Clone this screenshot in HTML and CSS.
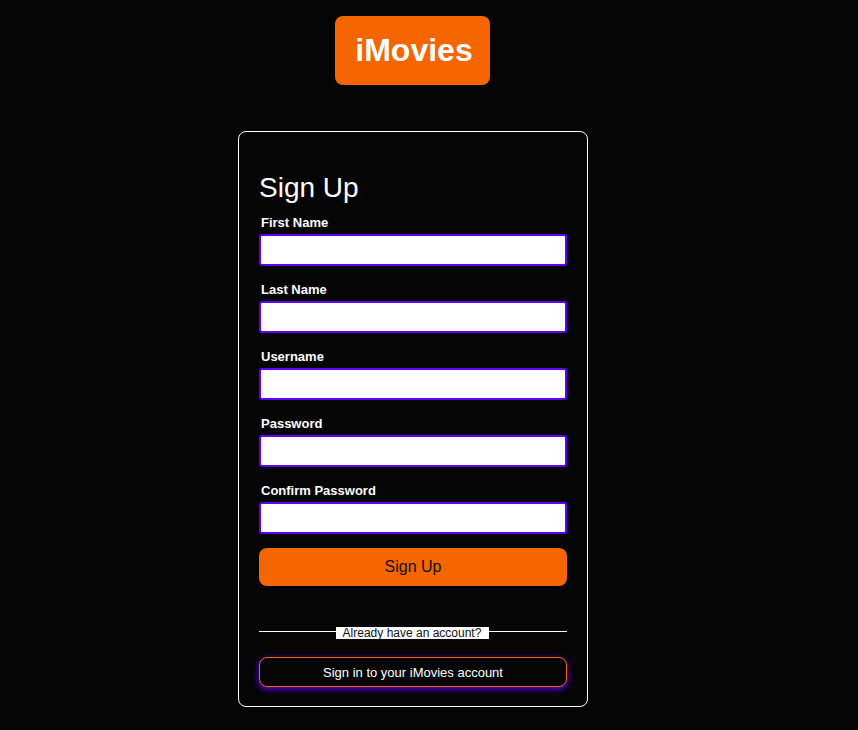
FILE: index.html
```html
<!DOCTYPE html>
<html>
<head>
  <link rel="stylesheet" href="styles.css">
</head>
<body>

<!-- Logo -->
<header class="logo-row">
  <a class="logo">iMovies</a>
</header>

<!-- Sign up form -->
<main class="card">
  <h1>Sign Up</h1>
  <form class="signup-form">
    <div class="field">
      <label for="firstName">First Name</label>
      <input type="text" id="firstName">
    </div>
    <div class="field">
      <label for="lastName">Last Name</label>
      <input type="text" id="lastName">
    </div>
    <div class="field">
      <label for="username">Username</label>
      <input type="text" id="username">
    </div>
    <div class="field">
      <label for="password">Password</label>
      <input type="password" id="password">
    </div>
    <div class="field">
      <label for="confirmPassword">Confirm Password</label>
      <input type="password" id="confirmPassword">
    </div>
    <button type="button" class="submit-btn">Sign Up</button>
  </form>

  <div class="divider"><span>Already have an account?</span></div>
  <button type="button" class="signin-btn">Sign in to your iMovies account</button>
</main>

</body>
</html>
```

FILE: styles.css
```css
* {
  box-sizing: border-box;
}
html {
  background-color: #050505;
}
body {
  width: 826px;
  height: 730px;
  margin: 0;
  overflow: hidden;
  background-color: #050505;
  color: #fff;
  font-family: "Liberation Sans", Arial, sans-serif;
}

/* Logo */
.logo-row {
  display: flex;
  justify-content: center;
  padding-top: 16px;
}
.logo {
  display: flex;
  align-items: center;
  justify-content: center;
  width: 155px;
  height: 69px;
  margin-right: 2px;
  padding-left: 4px;
  background-color: #f56600;
  border-radius: 8px;
  color: #fff;
  font-size: 32px;
  font-weight: bold;
}

/* Card */
.card {
  width: 350px;
  height: 576px;
  margin: 46px auto 0;
  padding: 40px 20px 0;
  border: 1px solid #fff;
  border-radius: 8px;
}
h1 {
  margin: 0 0 11px;
  font-size: 28px;
  font-weight: normal;
  line-height: 32px;
}

/* Form */
.field {
  margin-bottom: 16px;
}
.field label {
  display: block;
  height: 19px;
  padding-left: 2px;
  font-size: 13px;
  font-weight: bold;
  line-height: 15px;
}
.field input {
  display: block;
  width: 100%;
  height: 32px;
  background-color: #fff;
  border: 2px solid #5f00ff;
  border-radius: 3px;
}
.submit-btn {
  display: block;
  width: 100%;
  height: 38px;
  margin-top: -2px;
  background-color: #f56600;
  border: none;
  border-radius: 8px;
  color: #111;
  font-family: inherit;
  font-size: 16px;
}

/* Divider */
.divider {
  display: flex;
  justify-content: center;
  height: 1px;
  margin-top: 45px;
  background-color: #fff;
}
.divider span {
  width: 153px;
  height: 12px;
  margin-top: -4px;
  margin-right: 2px;
  background-color: #fff;
  color: #111;
  font-size: 12px;
  line-height: 13px;
  text-align: center;
}
.signin-btn {
  display: block;
  width: 100%;
  height: 30px;
  margin-top: 25px;
  background-color: #050505;
  border: 1px solid #f56600;
  border-radius: 8px;
  box-shadow: 0 2px 6px #5f00ff;
  color: #fff;
  font-family: inherit;
  font-size: 13px;
}
```
